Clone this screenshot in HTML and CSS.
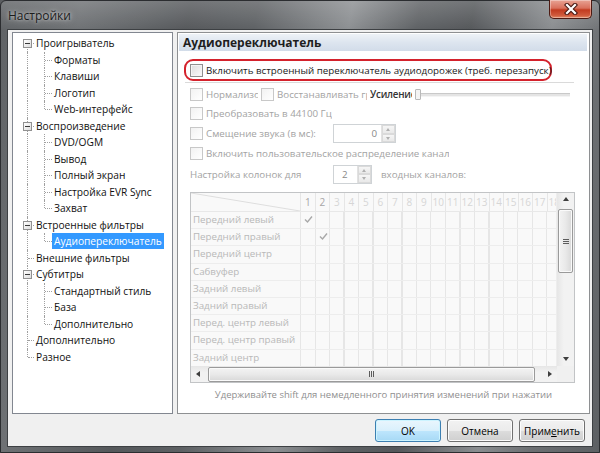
FILE: index.html
```html
<!DOCTYPE html>
<html lang="ru">
<head>
<meta charset="utf-8">
<title>Настройки</title>
<link rel="stylesheet" href="styles.css">
</head>
<body>
<div class="window">
  <div class="titlebar">
    <span class="title">Настройки</span>
    <div class="close">
      <svg width="14" height="12" viewBox="0 0 14 12"><path d="M3 2 L11 10 M11 2 L3 10" stroke="#4a1a14" stroke-width="4.4" stroke-linecap="square"/><path d="M3 2 L11 10 M11 2 L3 10" stroke="#ffffff" stroke-width="2.2" stroke-linecap="square"/></svg>
    </div>
  </div>
  <div class="client">
    <div class="main">
      <div class="tree">
        <div class="trow"><span class="cell c0 first h"><span class="exp"></span></span><span class="lbl">Проигрыватель</span></div>
        <div class="trow"><span class="cell p0"></span><span class="cell c1 h"></span><span class="lbl">Форматы</span></div>
        <div class="trow"><span class="cell p0"></span><span class="cell c1 h"></span><span class="lbl">Клавиши</span></div>
        <div class="trow"><span class="cell p0"></span><span class="cell c1 h"></span><span class="lbl">Логотип</span></div>
        <div class="trow"><span class="cell p0"></span><span class="cell c1 h last"></span><span class="lbl">Web-интерфейс</span></div>
        <div class="trow"><span class="cell c0 h"><span class="exp"></span></span><span class="lbl">Воспроизведение</span></div>
        <div class="trow"><span class="cell p0"></span><span class="cell c1 h"></span><span class="lbl">DVD/OGM</span></div>
        <div class="trow"><span class="cell p0"></span><span class="cell c1 h"></span><span class="lbl">Вывод</span></div>
        <div class="trow"><span class="cell p0"></span><span class="cell c1 h"></span><span class="lbl">Полный экран</span></div>
        <div class="trow"><span class="cell p0"></span><span class="cell c1 h"></span><span class="lbl">Настройка EVR Sync</span></div>
        <div class="trow"><span class="cell p0"></span><span class="cell c1 h last"></span><span class="lbl">Захват</span></div>
        <div class="trow"><span class="cell c0 h"><span class="exp"></span></span><span class="lbl">Встроенные фильтры</span></div>
        <div class="trow"><span class="cell p0"></span><span class="cell c1 h last"></span><span class="lbl sel">Аудиопереключатель</span></div>
        <div class="trow"><span class="cell c0 h"></span><span class="lbl">Внешние фильтры</span></div>
        <div class="trow"><span class="cell c0 h"><span class="exp"></span></span><span class="lbl">Субтитры</span></div>
        <div class="trow"><span class="cell p0"></span><span class="cell c1 h"></span><span class="lbl">Стандартный стиль</span></div>
        <div class="trow"><span class="cell p0"></span><span class="cell c1 h"></span><span class="lbl">База</span></div>
        <div class="trow"><span class="cell p0"></span><span class="cell c1 h last"></span><span class="lbl">Дополнительно</span></div>
        <div class="trow"><span class="cell c0 h"></span><span class="lbl">Дополнительно</span></div>
        <div class="trow"><span class="cell c0 h last"></span><span class="lbl">Разное</span></div>
      </div>

      <div class="page">
        <div class="page-head">Аудиопереключатель</div>
        <div class="hl">
          <span class="chk on"><span class="box"></span><span class="ctext">Включить встроенный переключатель аудиодорожек (треб. перезапуск)</span></span>
        </div>
        <div class="sep"></div>
        <div class="row r2">
          <span class="chk w1"><span class="box"></span><span class="ctext">Нормализовать</span></span>
          <span class="chk w2"><span class="box"></span><span class="ctext">Восстанавливать громкость</span></span>
          <span class="gain">Усиление</span>
          <span class="slider"><span class="thumb"></span><span class="track"></span></span>
        </div>
        <div class="row r3">
          <span class="chk"><span class="box"></span><span class="ctext">Преобразовать в 44100 Гц</span></span>
        </div>
        <div class="row r4">
          <span class="chk w3"><span class="box"></span><span class="ctext">Смещение звука (в мс):</span></span>
          <span class="edit e1"><span class="val right">0</span><span class="spin"><span class="sb up"></span><span class="sb dn"></span></span></span>
        </div>
        <div class="row r5">
          <span class="chk"><span class="box"></span><span class="ctext">Включить пользовательское распределение канал</span></span>
        </div>
        <div class="row r6">
          <span class="plain w4">Настройка колонок для</span>
          <span class="edit e2"><span class="val">2</span><span class="spin"><span class="sb up"></span><span class="sb dn"></span></span></span>
          <span class="plain">входных каналов:</span>
        </div>

        <div class="grid">
          <div class="gbody">
            <div class="gtable">
              <div class="ghead">
                <div class="corner-cell"><svg width="109" height="18" viewBox="0 0 109 18"><line x1="0" y1="0" x2="109" y2="18" stroke="#dedede" stroke-width="1"/></svg></div>
                <div class="nums">
                  <span class="hc act">1</span><span class="hc act">2</span><span class="hc">3</span><span class="hc">4</span><span class="hc">5</span><span class="hc">6</span><span class="hc">7</span><span class="hc">8</span><span class="hc">9</span><span class="hc">10</span><span class="hc">11</span><span class="hc">12</span><span class="hc">13</span><span class="hc">14</span><span class="hc">15</span><span class="hc">16</span><span class="hc">17</span><span class="hc">18</span>
                </div>
              </div>
              <div class="grow"><span class="gl">Передний левый</span><span class="gcells"><svg class="tick t1" width="9" height="9" viewBox="0 0 9 9"><path d="M1 4.5 L3.5 7 L8 1.5" fill="none" stroke="#a8a8a8" stroke-width="1.4"/></svg></span></div>
              <div class="grow"><span class="gl">Передний правый</span><span class="gcells"><svg class="tick t2" width="9" height="9" viewBox="0 0 9 9"><path d="M1 4.5 L3.5 7 L8 1.5" fill="none" stroke="#a8a8a8" stroke-width="1.4"/></svg></span></div>
              <div class="grow"><span class="gl">Передний центр</span><span class="gcells"></span></div>
              <div class="grow"><span class="gl">Сабвуфер</span><span class="gcells"></span></div>
              <div class="grow"><span class="gl">Задний левый</span><span class="gcells"></span></div>
              <div class="grow"><span class="gl">Задний правый</span><span class="gcells"></span></div>
              <div class="grow"><span class="gl">Перед. центр левый</span><span class="gcells"></span></div>
              <div class="grow"><span class="gl">Перед. центр правый</span><span class="gcells"></span></div>
              <div class="grow"><span class="gl">Задний центр</span><span class="gcells"></span></div>
            </div>
            <div class="vscroll">
              <span class="arr aup"></span>
              <span class="vthumb"><span class="vgrip"></span></span>
              <span class="vtrack"></span>
              <span class="arr adn"></span>
            </div>
          </div>
          <div class="hbar">
            <div class="hscroll">
              <span class="arr alt"></span>
              <span class="hthumb"><span class="hgrip"></span></span>
              <span class="arr art"></span>
            </div>
            <div class="sq"></div>
          </div>
        </div>
        <div class="hint">Удерживайте shift для немедленного принятия изменений при нажатии</div>
      </div>
    </div>
    <div class="btns">
      <span class="btn def">OK</span>
      <span class="btn">Отмена</span>
      <span class="btn">Прим<u>е</u>нить</span>
    </div>
  </div>
</div>
</body>
</html>
```
FILE: styles.css
```css
html, body { margin: 0; padding: 0; }
body {
  width: 600px; height: 453px; overflow: hidden;
  font-family: "Open Sans", "Noto Sans", sans-serif;
  font-size: 9.75px;
  color: #000;
  background: #5a5d60;
}
.window {
  width: 600px; height: 453px; box-sizing: border-box;
  border: 1px solid #2b2d30;
  border-radius: 6px 6px 0 0;
  display: flex; flex-direction: column;
  background:
    linear-gradient(180deg, rgba(255,255,255,0.18), rgba(255,255,255,0) 30px),
    linear-gradient(100deg, #5f6265 0%, #6e7174 12%, #55585b 28%, #5d6063 38%, #7f8285 48%, #8c8f92 52%, #5e6164 62%, #54575a 70%, #8a8d90 82%, #6c6f72 90%, #5d6063 100%);
}
.titlebar {
  height: 29px; flex: none;
  display: flex; align-items: flex-start;
  position: relative;
}
.title {
  margin: 6px 0 0 7px;
  font-size: 12px;
  color: #1c1c1c;
  text-shadow: 0 0 6px rgba(255,255,255,0.6), 0 0 3px rgba(255,255,255,0.5);
}
.close {
  position: absolute; right: 7px; top: -1px;
  width: 43px; height: 19px; box-sizing: border-box;
  border: 1px solid #4d1a12;
  border-top: none;
  border-radius: 0 0 5px 5px;
  background: linear-gradient(180deg, #e8a394 0%, #d9705c 45%, #c23b20 55%, #d05a3c 85%, #e08a66 100%);
  box-shadow: inset 0 0 0 1px rgba(255,255,255,0.35);
  display: flex; align-items: center; justify-content: center;
}
.client {
  margin: 0 7px 6px 7px;
  flex: 1;
  background: #f0f0f0;
  box-shadow: 0 0 0 1px #3d4043;
  display: flex; flex-direction: column;
  padding: 2px 2px 4px 4px;
}
.main { display: flex; gap: 4px; height: 382px; }

/* tree */
.tree {
  width: 161px; height: 382px; box-sizing: border-box;
  border: 1px solid #828790;
  background: #fff;
  padding: 2px 0 0 5px;
  font-size: 10.2px;
  color: #111;
}
.trow { height: 16.5px; display: flex; align-items: stretch; }
.cell { position: relative; flex: none; width: 16px; }
.c1 { width: 18px; }
.cell::before {
  content: ""; position: absolute; left: 9px; top: 0; bottom: 0;
  border-left: 1px dotted #a0a0a0;
}
.c1::before { left: 10px; }
.first::before { top: 50%; }
.last::before { bottom: 50%; }
.h::after {
  content: ""; position: absolute; left: 10px; right: 0; top: 50%;
  border-top: 1px dotted #a0a0a0;
}
.c1.h::after { left: 11px; }
.exp {
  position: absolute; left: 5px; top: calc(50% - 4px);
  width: 9px; height: 9px; box-sizing: border-box;
  border: 1px solid #919191;
  background: linear-gradient(135deg, #ffffff, #dcdcdc);
  z-index: 1;
}
.exp::after {
  content: ""; position: absolute; left: 1px; top: 3px; width: 5px; height: 1px; background: #3a3a3a;
}
.lbl {
  padding: 0 2px; line-height: 16px; height: 16px; white-space: nowrap;
  align-self: center;
}
.lbl.sel { background: #3399ff; color: #fff; }

/* page */
.page {
  width: 413px; height: 382px; box-sizing: border-box;
  border: 1px solid #8e9092;
  background: #fff;
  display: flex; flex-direction: column;
  color: #a3a3a3;
}
.page-head {
  margin: 1px 2px 0 1px; height: 17px; line-height: 17px;
  padding-left: 4px;
  font-weight: bold; font-size: 12px;
  color: #1e1e1e;
  background: linear-gradient(180deg, #eef2f7 0%, #dde5ef 50%, #d2dce9 100%);
}
.hl {
  margin: 8px 0 0 6px; width: 368px; height: 22px; box-sizing: border-box;
  border: 2px solid #d4222c; border-radius: 9px;
  display: flex; align-items: center; padding-left: 4px;
}
.chk { display: flex; align-items: center; white-space: nowrap; overflow: hidden; flex: none; }
.box {
  flex: none; width: 13px; height: 13px; box-sizing: border-box;
  border: 1px solid #c8c8c8;
  background: linear-gradient(135deg, #f2f2f2, #ffffff);
  margin-right: 3px;
}
.chk.on { color: #1a1a1a; }
.chk.on .box { border-color: #8e8f8f; background: linear-gradient(135deg, #dcdcdc, #fbfbfb); box-shadow: inset 0 0 0 1px #f4f4f4; }
.sep { margin: 1px 15px 0 7px; height: 1px; background: #dadada; }
.row { display: flex; align-items: center; padding-left: 12px; white-space: nowrap; }
.r2 { margin-top: 2px; height: 19px; }
.r3 { height: 19px; }
.r4 { height: 21px; }
.r5 { height: 19px; }
.r6 { height: 22px; }
.w1 { width: 68px; margin-right: 3px; }
.w2 { width: 106px; margin-right: 3px; }
.w3 { width: 143px; }
.w4 { width: 143px; }
.gain { width: 42px; overflow: hidden; color: #333; font-weight: 600; letter-spacing: -0.2px; }
.slider { display: flex; align-items: center; margin-left: 3px; width: 155px; }
.thumb { width: 6px; height: 11px; box-sizing: border-box; border: 1px solid #b9b9b9; border-radius: 1px; background: #f4f4f4; flex: none; }
.track { flex: 1; height: 2px; border-top: 1px solid #c9c9c9; border-bottom: 1px solid #f4f4f4; background: #e4e4e4; }
.edit {
  display: flex; align-items: stretch; box-sizing: border-box;
  border: 1px solid #cfd3d6; background: #fff; height: 19px;
}
.e1 { width: 63px; }
.e2 { width: 39px; margin-right: 9px; }
.val { flex: 1; line-height: 17px; padding: 0 4px; color: #8a8a8a; }
.val.right { text-align: right; }
.val:not(.right) { padding-left: 8px; }
.spin { width: 13px; display: flex; flex-direction: column; border-left: 1px solid #e2e2e2; }
.sb { flex: 1; background: linear-gradient(#f6f6f6, #e9e9e9); border: 1px solid #dadada; position: relative; }
.sb::after { content: ""; position: absolute; left: 3px; top: 2px; border: 2.5px solid transparent; }
.sb.up::after { border-bottom: 3px solid #b0b0b0; top: 0; }
.sb.dn::after { border-top: 3px solid #b0b0b0; top: 2px; }

/* grid */
.grid {
  margin: 7px 0 0 12px; width: 385px; height: 191px; box-sizing: border-box;
  border: 1px solid #c2c4c6;
  display: flex; flex-direction: column;
  background: #f9f9f9;
}
.gbody { flex: 1; display: flex; min-height: 0; }
.gtable { flex: 1; overflow: hidden; }
.ghead, .grow { display: flex; }
.ghead { height: 18px; border-bottom: 1px solid #e8e8e8; }
.corner-cell { width: 109px; flex: none; line-height: 0; }
.nums { display: flex; flex: none; }
.hc {
  width: 14.5px; flex: none; box-sizing: border-box;
  border-left: 1px solid #e6e6e6;
  text-align: center; font-size: 10px; line-height: 18px; color: #d6d6d6;
  overflow: hidden;
}
.hc.act { color: #a6a6a6; }
.grow { height: 17.2px; border-bottom: 1px solid #ededed; box-sizing: border-box; }
.gl { width: 109px; flex: none; line-height: 16px; padding-left: 2px; box-sizing: border-box; color: #b8b8b8; white-space: nowrap; overflow: hidden; }
.gcells {
  flex: none; width: 262px; position: relative;
  background: repeating-linear-gradient(90deg, #e6e6e6 0 1px, transparent 1px 14.5px);
}
.tick { position: absolute; top: 3px; }
.t1 { left: 4px; }
.t2 { left: 18.5px; }
.vscroll {
  width: 17px; flex: none; display: flex; flex-direction: column; align-items: center;
  background: linear-gradient(90deg, #e6e6e6, #f2f2f2 40%, #f2f2f2);
  border-left: 1px solid #ededed;
}
.arr { flex: none; width: 16px; height: 16px; position: relative; }
.arr::after { content: ""; position: absolute; border: 3px solid transparent; }
.aup::after { left: 5px; top: 4px; border-bottom: 4px solid #3e3e3e; border-top: none; }
.adn::after { left: 5px; top: 7px; border-top: 4px solid #3e3e3e; border-bottom: none; }
.alt::after { left: 5px; top: 5px; border-right: 4px solid #3e3e3e; border-left: none; }
.art::after { left: 7px; top: 5px; border-left: 4px solid #3e3e3e; border-right: none; }
.vthumb {
  width: 15px; height: 64px; box-sizing: border-box; flex: none;
  border: 1px solid #9a9a9a; border-radius: 2px;
  background: linear-gradient(90deg, #f3f3f3, #e9e9e9 50%, #d8d8d8);
  box-shadow: inset 0 0 0 1px #fafafa;
  display: flex; align-items: center; justify-content: center;
}
.vgrip { width: 6px; height: 5px; background: repeating-linear-gradient(180deg, #5c5c5c 0 1px, transparent 1px 2px); }
.vtrack { flex: 1; }
.hbar { height: 16px; display: flex; flex: none; }
.hscroll {
  flex: 1; display: flex; align-items: center;
  background: linear-gradient(180deg, #e6e6e6, #f2f2f2 40%, #f2f2f2);
}
.hthumb {
  flex: none; width: 327px; height: 15px; box-sizing: border-box; margin-left: 1px;
  border: 1px solid #9a9a9a; border-radius: 2px;
  background: linear-gradient(180deg, #f3f3f3, #e9e9e9 50%, #d8d8d8);
  box-shadow: inset 0 0 0 1px #fafafa;
  display: flex; align-items: center; justify-content: center;
}
.hgrip { width: 5px; height: 6px; background: repeating-linear-gradient(90deg, #5c5c5c 0 1px, transparent 1px 2px); }
.art { margin-left: auto; }
.sq { width: 17px; background: #f0f0f0; }
.hint { margin-top: 4px; height: 16px; line-height: 16px; text-align: center; color: #8f8f8f; font-size: 9.5px; }

/* buttons */
.btns { display: flex; justify-content: flex-end; gap: 6px; margin-top: 5px; padding-right: 5px; }
.btn {
  width: 66px; height: 23px; box-sizing: border-box;
  border: 1px solid #707070; border-radius: 3px;
  background: linear-gradient(180deg, #f2f2f2 0%, #ebebeb 50%, #dddddd 51%, #cfcfcf 100%);
  box-shadow: inset 0 0 0 1px #fcfcfc;
  display: flex; align-items: center; justify-content: center;
  color: #000; font-size: 10px;
}
.btn.def {
  border-color: #3c7fb1;
  background: linear-gradient(180deg, #eaf6fd 0%, #d9f0fc 50%, #bee6fd 51%, #a7d9f5 100%);
  box-shadow: inset 0 0 0 1px #ccf4ff;
}
```
